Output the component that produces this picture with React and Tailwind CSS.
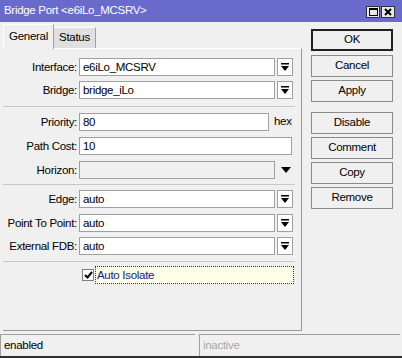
const font = { fontFamily: '"Liberation Sans", Arial, sans-serif' };

function DropBtn() {
  return (
    <div className="ml-[2px] flex h-[18px] w-[16px] items-center justify-center border border-[#a0a0a0] bg-white">
      <svg width="8" height="9" viewBox="0 0 8 9">
        <rect x="0" y="0" width="8" height="1.5" fill="#000" />
        <path d="M0 3 H8 L4 8 Z" fill="#000" />
      </svg>
    </div>
  );
}

function Label({ children }) {
  return (
    <div className="w-[76px] shrink-0 whitespace-nowrap pr-[2px] text-right text-[11.5px] leading-[18px] tracking-[-0.3px] text-black">
      {children}
    </div>
  );
}

function Field({ label, value, drop, mt }) {
  return (
    <div className={`flex items-center ${mt}`}>
      <Label>{label}</Label>
      <div className="h-[18px] w-[196px] border border-[#a0a0a0] bg-white pl-[3px] text-[11.5px] leading-[16px] tracking-[-0.3px]">{value}</div>
      {drop ? <DropBtn /> : null}
    </div>
  );
}

function Sep({ mt }) {
  return <div className={`h-px w-[292px] bg-[#c8c8c8] ${mt}`} />;
}

function Btn({ children, primary, mt }) {
  return (
    <div
      className={`flex h-[22px] w-[82px] items-center justify-center bg-[#f0f0f0] text-[11.5px] tracking-[-0.3px] text-black ${
        primary ? "border-2 border-[#202020]" : "border border-[#8a8a8a]"
      } ${mt}`}
    >
      {children}
    </div>
  );
}

export default function App() {
  return (
    <div className="flex h-[358px] w-[402px] flex-col overflow-hidden bg-[#f0f0f0]" style={font}>
      {/* title bar */}
      <div className="flex h-[22px] shrink-0 items-center justify-between bg-[#6a6acc] pl-[4px] pr-[7px]">
        <span className="text-[11.5px] tracking-[-0.3px] text-white">Bridge Port &lt;e6iLo_MCSRV&gt;</span>
        <div className="flex gap-[1px] pt-[2px]">
          <div className="flex h-[12px] w-[14px] items-center justify-center border border-[#333] bg-[#e8e8e8]">
            <div className="h-[8px] w-[9px] border border-black border-t-2" />
          </div>
          <div className="flex h-[12px] w-[14px] items-center justify-center border border-[#333] bg-[#e8e8e8]">
            <svg width="8" height="8" viewBox="0 0 8 8">
              <path d="M1 1 L7 7 M7 1 L1 7" stroke="#000" strokeWidth="2" />
            </svg>
          </div>
        </div>
      </div>

      <div className="flex flex-1">
        {/* left side */}
        <div className="flex w-[302px] flex-col pl-[3px]">
          <div className="flex h-[26px] items-end pt-[2px]">
            <div className="z-10 -mb-px flex h-[25px] w-[51px] items-center justify-center border-l border-t border-r border-l-white border-t-white border-r-[#a0a0a0] bg-[#f0f0f0] text-[11.5px] tracking-[-0.3px]">
              General
            </div>
            <div className="flex h-[21px] w-[42px] items-center justify-center border-t border-r border-t-white border-r-[#a0a0a0] bg-[#e0e0e0] text-[11.5px] tracking-[-0.3px]">
              Status
            </div>
          </div>
          <div className="flex h-[283px] w-[299px] flex-col border-t border-r border-b border-t-white border-r-[#9a9a9a] border-b-[#9a9a9a] pt-[9px]">
            <Field label="Interface:" value="e6iLo_MCSRV" drop />
            <Field label="Bridge:" value="bridge_iLo" drop mt="mt-[5px]" />
            <Sep mt="mt-[7px]" />
            <div className="mt-[6px] flex items-center">
              <Label>Priority:</Label>
              <div className="h-[18px] w-[190px] border border-[#a0a0a0] bg-white pl-[3px] text-[11.5px] leading-[16px] tracking-[-0.3px]">80</div>
              <span className="ml-[5px] text-[11.5px] tracking-[-0.3px]">hex</span>
            </div>
            <div className="mt-[6px] flex items-center">
              <Label>Path Cost:</Label>
              <div className="h-[18px] w-[213px] border border-[#a0a0a0] bg-white pl-[3px] text-[11.5px] leading-[16px] tracking-[-0.3px]">10</div>
            </div>
            <div className="mt-[6px] flex items-center">
              <Label>Horizon:</Label>
              <div className="h-[18px] w-[196px] border border-[#a0a0a0] bg-[#f0f0f0]" />
              <svg className="ml-[6px]" width="10" height="6" viewBox="0 0 10 6">
                <path d="M0 0 H10 L5 6 Z" fill="#000" />
              </svg>
            </div>
            <Sep mt="mt-[5px]" />
            <Field label="Edge:" value="auto" drop mt="mt-[5px]" />
            <Field label="Point To Point:" value="auto" drop mt="mt-[6px]" />
            <Field label="External FDB:" value="auto" drop mt="mt-[5px]" />
            <Sep mt="mt-[6px]" />
            <div className="mt-[4px] flex items-center pl-[79px]">
              <div className="flex h-[12px] w-[12px] items-center justify-center border border-[#808080] bg-white">
                <svg width="9" height="8" viewBox="0 0 9 8">
                  <path d="M1 4 L3.5 6.5 L8 1" stroke="#000" strokeWidth="2" fill="none" />
                </svg>
              </div>
              <div className="ml-[1px] h-[18px] w-[199px] border border-dotted border-[#333] bg-[#fdfde8] pl-[1px] text-[11.5px] leading-[16px] tracking-[-0.3px] text-[#1a1a80]">
                Auto Isolate
              </div>
            </div>
          </div>
        </div>

        {/* right buttons */}
        <div className="flex flex-col pl-[9px] pt-[7px]">
          <Btn primary>OK</Btn>
          <Btn mt="mt-[4px]">Cancel</Btn>
          <Btn mt="mt-[3px]">Apply</Btn>
          <Btn mt="mt-[10px]">Disable</Btn>
          <Btn mt="mt-[3px]">Comment</Btn>
          <Btn mt="mt-[3px]">Copy</Btn>
          <Btn mt="mt-[3px]">Remove</Btn>
        </div>
      </div>

      {/* status bar */}
      <div className="flex h-[26px] shrink-0 gap-[4px] border-b-2 border-[#303030] pt-[2px]">
        <div className="h-[22px] w-[195px] border-l border-t border-[#a0a0a0] pl-[3px] text-[11.5px] leading-[20px] tracking-[-0.3px] text-black">enabled</div>
        <div className="h-[22px] w-[201px] border-l border-t border-[#a0a0a0] pl-[3px] text-[11.5px] leading-[20px] tracking-[-0.3px] text-[#a8a8a8]">inactive</div>
      </div>
    </div>
  );
}
